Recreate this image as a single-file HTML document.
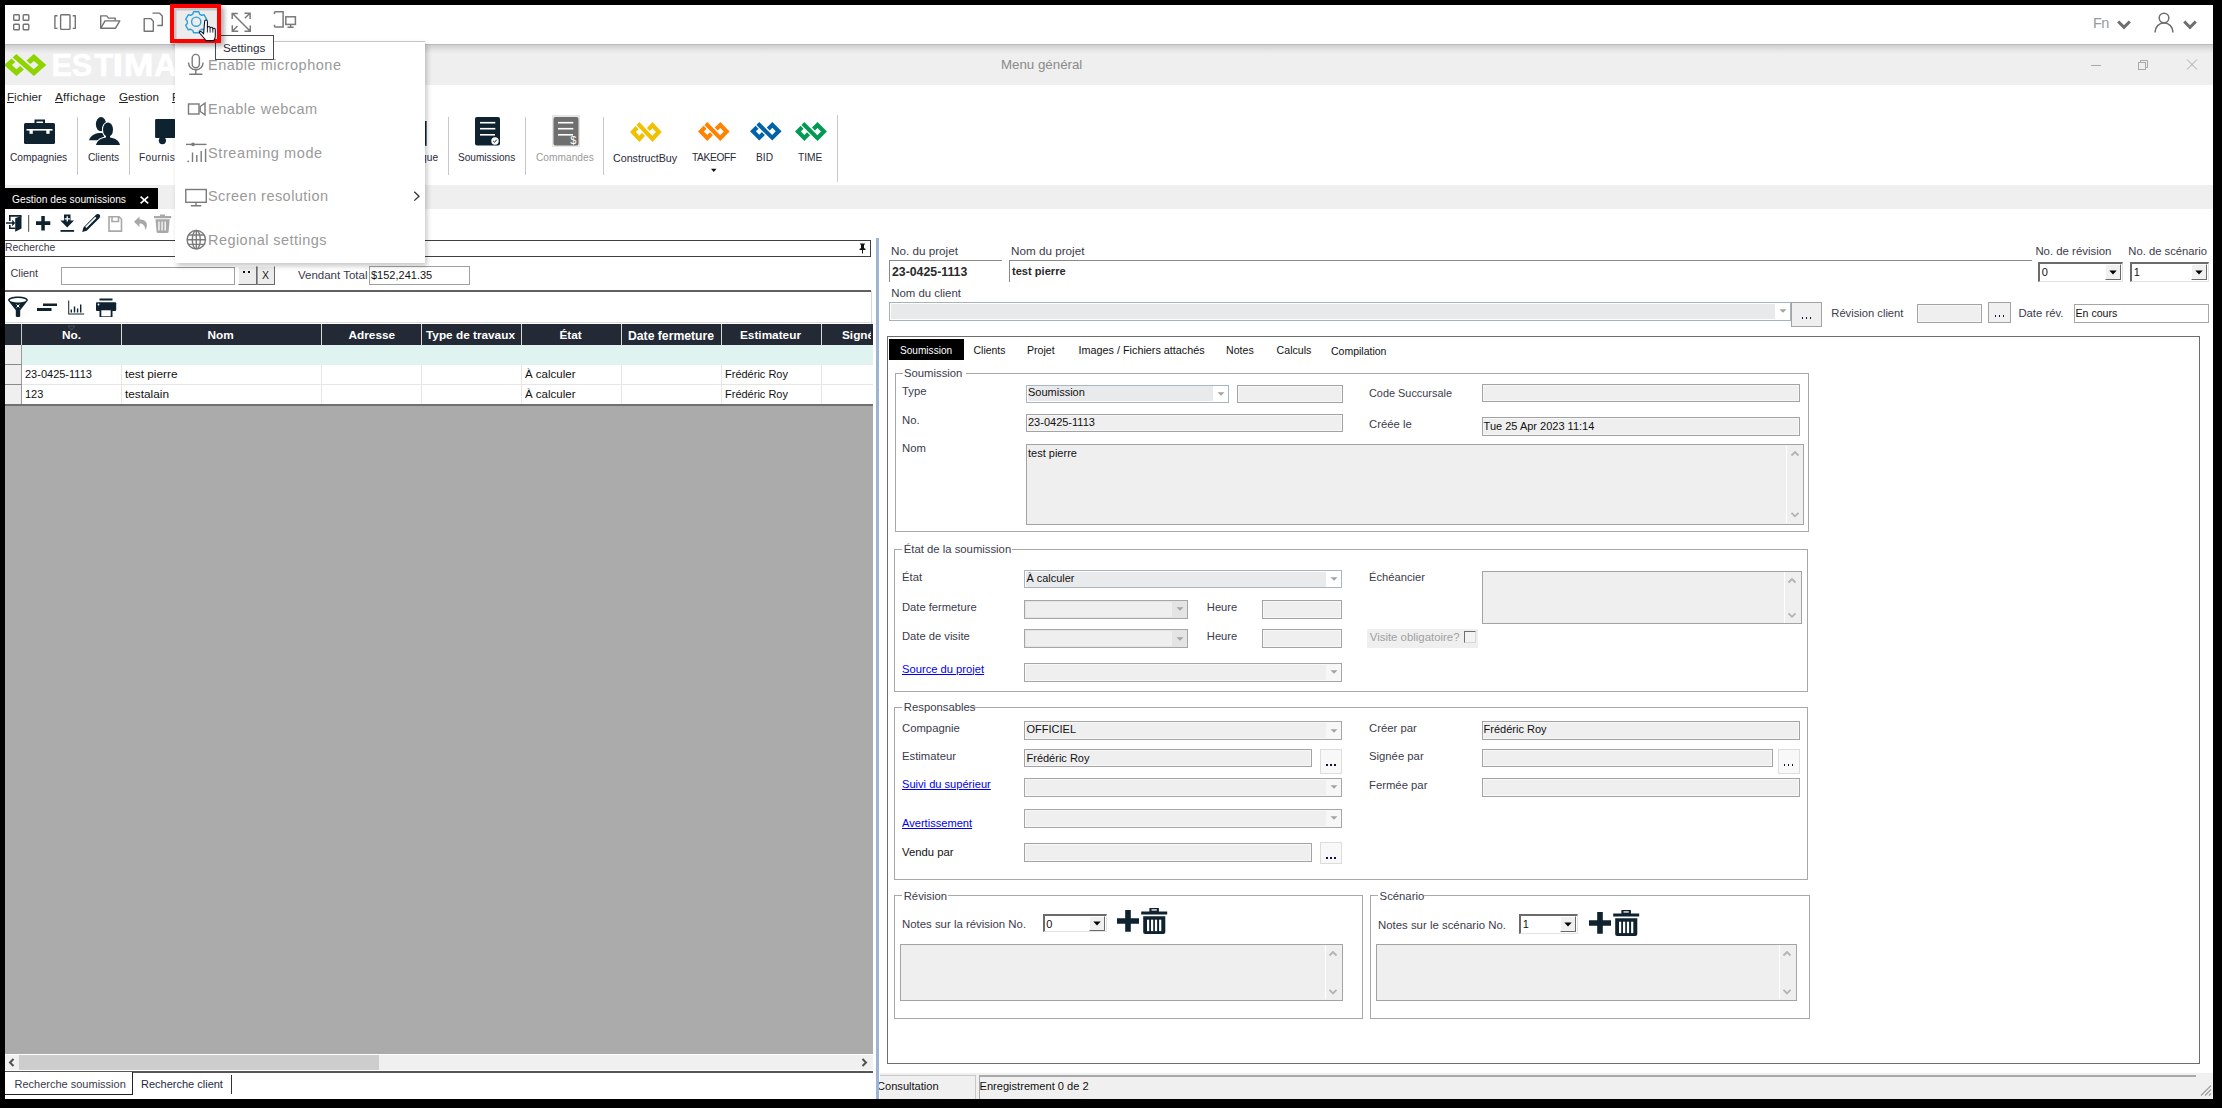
<!DOCTYPE html>
<html><head><meta charset="utf-8">
<style>
*{box-sizing:border-box}
html,body{margin:0;padding:0}
body{width:2222px;height:1108px;background:#000;position:relative;overflow:hidden;font-family:"Liberation Sans",sans-serif;color:#222}
.a{position:absolute}
.t{position:absolute;white-space:nowrap;line-height:1;font-family:"Liberation Sans",sans-serif}
svg{position:absolute;overflow:visible}
</style></head><body>
<!-- app white area -->
<div class="a" style="left:5px;top:5px;width:2208px;height:1094px;background:#fff"></div>

<!-- top toolbar bottom border -->
<div class="a" style="left:5px;top:44px;width:2208px;height:1.2px;background:#bbbbbb"></div>
<!-- title bar -->
<div class="a" style="left:5px;top:45px;width:2208px;height:40px;background:linear-gradient(#d0d0d0 0px,#d6d6d6 2px,#e4e4e4 5px,#efefef 8.5px,#efefef 100%)"></div>
<div class="t" style="left:1001px;top:58px;font-size:13.3px;color:#8a8a8a">Menu général</div>

<!-- gray band under ribbon -->
<div class="a" style="left:5px;top:185px;width:2208px;height:24px;background:#efefef"></div>
<div class="a" style="left:5px;top:188px;width:153px;height:21px;background:#000"></div>
<div class="t" style="left:11.5px;top:193.5px;font-size:11.4px;color:#fff;transform:scaleX(0.9);transform-origin:0 0">Gestion des soumissions</div>


<!-- ===== TOP TOOLBAR ===== -->
<svg style="left:0;top:0" width="320" height="45">
 <g fill="none" stroke="#737373" stroke-width="1.4" stroke-linejoin="round">
  <rect x="13.7" y="14.7" width="5.6" height="5.6" rx="0.8"/><rect x="23.2" y="14.7" width="5.6" height="5.6" rx="0.8"/>
  <rect x="13.7" y="24.2" width="5.6" height="5.6" rx="0.8"/><rect x="23.2" y="24.2" width="5.6" height="5.6" rx="0.8"/>
  <path d="M57.5 15.8h-2.6v12.6h2.6"/><rect x="60.6" y="14.7" width="9.4" height="14.7" rx="0.8"/><path d="M72.7 15.8h2.6v12.6h-2.6"/>
  <path d="M100.7 28.3V15.9h6l1.7 2.2h6.8v2.7"/><path d="M100.7 28.3l4.3-7.4h14.8l-4.4 7.4z"/>
  <path d="M144.2 31.2V18.6h6.5l2.6 2.6v10z"/><path d="M152.5 13.1h6.8l3 3v9.4h-5"/>
 </g>
 <g fill="none" stroke="#7a7a7a" stroke-width="1.5">
  <path d="M232.5 13.5l17.5 17.5M232.2 19v-5.6h5.6M250.3 25.5v5.8h-5.8M249.8 13.3l-5 5M232.5 31l5-5M244.5 13.3h5.6v5.6M232.3 25.3v5.9h5.9"/>
 </g>
 <g fill="none" stroke="#7a7a7a" stroke-width="1.5">
  <path d="M274.5 11.8h8.6v15.2h-8.6"/><path d="M274.5 11.8v2.2M274.5 24.8v2.2"/>
  <rect x="285.8" y="16.8" width="9.6" height="7.6"/><path d="M290.6 24.4v3M287.5 27.2h6.2"/>
 </g>
</svg>
<div class="t" style="left:2093px;top:16px;font-size:14.5px;color:#9a9a9a;letter-spacing:-0.5px">Fn</div>
<svg style="left:2080px;top:0" width="140" height="45">
 <g fill="none" stroke="#6e6e6e" stroke-width="3" stroke-linejoin="miter">
  <path d="M38.2 21.5l5.8 5.8 5.8-5.8"/><path d="M104.2 21.5l5.8 5.8 5.8-5.8"/>
 </g>
 <g fill="none" stroke="#6e6e6e" stroke-width="1.5">
  <circle cx="84" cy="18" r="4.8"/><path d="M75 32.6c0-5.8 4-9.6 9-9.6s9 3.8 9 9.6"/>
 </g>
</svg>
<!-- window controls -->
<svg style="left:2080px;top:50px" width="140" height="30">
 <g fill="none" stroke="#a8a8a8" stroke-width="1">
  <path d="M11 15.5h10"/>
  <rect x="58.5" y="12.5" width="7" height="7"/><path d="M60.5 12.5v-2h7v7h-2"/>
  <path d="M107 9.5l10 10M117 9.5l-10 10"/>
 </g>
</svg>


<!-- ===== TITLE BAR LOGO ===== -->
<svg style="left:1.95px;top:52.00px" width="46.3" height="26.1"><path d="M14.45 2.00 L31.69 17.30 L36.49 13.05 L31.88 8.96 L28.46 12.00 L24.53 8.52 L31.88 2.00 L44.33 13.05 L31.88 24.10 L10.59 5.43Z M9.47 6.42 L2.00 13.05 L14.45 24.10 L21.92 17.47 L18.00 13.99 L14.45 17.14 L9.84 13.05 L13.39 9.90Z" fill="#8fd400"/></svg>

<div class="t" style="left:51.5px;top:50.2px;font-size:30.6px;font-weight:700;color:#fff;-webkit-text-stroke:0.6px #fff;">E</div><div class="t" style="left:71.7px;top:50.2px;font-size:30.6px;font-weight:700;color:#fff;-webkit-text-stroke:0.6px #fff;">S</div><div class="t" style="left:94.2px;top:50.2px;font-size:30.6px;font-weight:700;color:#fff;-webkit-text-stroke:0.6px #fff;">T</div><div class="t" style="left:113.3px;top:50.2px;font-size:30.6px;font-weight:700;color:#fff;-webkit-text-stroke:0.6px #fff;transform:scaleX(1.25);transform-origin:2.2px 0;">I</div><div class="t" style="left:123.6px;top:50.2px;font-size:30.6px;font-weight:700;color:#fff;-webkit-text-stroke:0.6px #fff;transform:scaleX(1.17);transform-origin:2.2px 0;">M</div><div class="t" style="left:154.3px;top:50.2px;font-size:30.6px;font-weight:700;color:#fff;-webkit-text-stroke:0.6px #fff;transform:scaleX(1.05);transform-origin:0.1px 0;">A</div><div class="t" style="left:177.4px;top:50.2px;font-size:30.6px;font-weight:700;color:#fff;-webkit-text-stroke:0.6px #fff;">T</div>

<!-- ===== MENU BAR ===== -->
<div class="t" style="left:7px;top:90.8px;font-size:11.6px;color:#222"><u>F</u>ichier</div>
<div class="t" style="left:55px;top:90.8px;font-size:11.6px;letter-spacing:0.3px;color:#222"><u>A</u>ffichage</div>
<div class="t" style="left:119px;top:90.8px;font-size:11.6px;color:#222"><u>G</u>estion</div>
<div class="t" style="left:172px;top:90.8px;font-size:11.6px;color:#222"><u>F</u>ournisseurs</div>

<!-- ===== RIBBON ===== -->
<div class="a" style="left:77px;top:117px;width:1px;height:58px;background:#c8c8c8"></div>
<div class="a" style="left:129px;top:117px;width:1px;height:58px;background:#c8c8c8"></div>
<div class="a" style="left:448px;top:117px;width:1px;height:58px;background:#c8c8c8"></div>
<div class="a" style="left:525px;top:117px;width:1px;height:58px;background:#c8c8c8"></div>
<div class="a" style="left:603px;top:117px;width:1px;height:58px;background:#c8c8c8"></div>
<div class="a" style="left:837px;top:115px;width:1px;height:67px;background:#c8c8c8"></div>
<svg style="left:0;top:100px" width="860" height="80">
 <g fill="#0f2230">
  <!-- briefcase -->
  <path d="M34.5 19.5h10.5v4.5h-2v-2.5h-6.5v2.5h-2z"/>
  <rect x="24" y="23" width="31" height="21" rx="1.5"/>
 </g>
 <g fill="#fff"><rect x="26.5" y="29" width="26" height="1.6"/><rect x="29.5" y="30" width="3.3" height="3.8"/><rect x="46.3" y="30" width="3.3" height="3.8"/></g>
 <g fill="#0f2230">
  <!-- clients -->
  <ellipse cx="101" cy="24.2" rx="5.1" ry="7.1"/>
  <path d="M89 40.2C90.5 36 94 33.5 99 33h5v7.2z"/>
  <g stroke="#fff" stroke-width="2.2"><ellipse cx="108" cy="29.7" rx="5" ry="7.2"/><path d="M96 44.9C97.5 40 102 37.6 108 37.6S118.5 40 120 44.9z"/></g>
  <ellipse cx="108" cy="29.7" rx="5" ry="7.2"/><rect x="106" y="35" width="4" height="3.5"/><path d="M96 44.9C97.5 40 102 37.6 108 37.6S118.5 40 120 44.9z"/>
  <!-- fournisseurs truck (partial) -->
  <rect x="155.1" y="19" width="20" height="19" rx="1"/>
  <circle cx="162.4" cy="40.6" r="3.6"/>
  <!-- right bar of hidden icon -->
  <rect x="425" y="21" width="1.6" height="24.8"/>
  <!-- soumissions -->
  <rect x="475" y="17" width="25" height="28.5" rx="2"/>
 </g>
 <g fill="#fff">
  <rect x="480" y="21.9" width="15.3" height="1.6"/><rect x="480" y="27.9" width="15.3" height="1.6"/><rect x="480" y="34" width="15" height="1.6"/>
  <circle cx="495" cy="41" r="3.7"/>
 </g>
 <path d="M493.2 41l1.3 1.3 2.2-2.6" fill="none" stroke="#0f2230" stroke-width="1"/>
 <rect x="552" y="15" width="28" height="32" fill="#e6e6e6"/>
 <rect x="553.5" y="17" width="25" height="28.5" rx="2" fill="#6f6f6f"/>
 <g fill="#fff">
  <rect x="558" y="21.9" width="15.3" height="1.6"/><rect x="558" y="27.9" width="15.3" height="1.6"/><rect x="558" y="34" width="15" height="1.6"/>
 </g>
 <text x="570.3" y="44.3" font-family="Liberation Sans" font-size="11" fill="#fff">$</text>
 <path d="M711 68.8h5.5l-2.75 3.2z" fill="#111"/>
</svg>

<svg style="left:628.00px;top:119.90px" width="35.8" height="24.0"><path d="M11.35 2.00 L24.31 15.85 L27.91 12.00 L24.45 8.30 L21.88 11.05 L18.93 7.90 L24.45 2.00 L33.80 12.00 L24.45 22.00 L8.45 5.10Z M7.61 6.00 L2.00 12.00 L11.35 22.00 L16.96 16.00 L14.02 12.85 L11.35 15.70 L7.89 12.00 L10.56 9.15Z" fill="#efc100"/></svg>
<svg style="left:696.00px;top:119.50px" width="35.6" height="23.0"><path d="M11.29 2.00 L24.17 15.16 L27.74 11.50 L24.31 7.98 L21.75 10.60 L18.82 7.61 L24.31 2.00 L33.60 11.50 L24.31 21.00 L8.41 4.95Z M7.58 5.80 L2.00 11.50 L11.29 21.00 L16.87 15.30 L13.94 12.31 L11.29 15.02 L7.86 11.50 L10.50 8.79Z" fill="#ff8200"/></svg>
<svg style="left:748.20px;top:119.50px" width="35.6" height="22.6"><path d="M11.29 2.00 L24.17 14.88 L27.74 11.30 L24.31 7.86 L21.75 10.42 L18.82 7.49 L24.31 2.00 L33.60 11.30 L24.31 20.60 L8.41 4.88Z M7.58 5.72 L2.00 11.30 L11.29 20.60 L16.87 15.02 L13.94 12.09 L11.29 14.74 L7.86 11.30 L10.50 8.65Z" fill="#0062a8"/></svg>
<svg style="left:792.90px;top:119.50px" width="35.9" height="23.0"><path d="M11.38 2.00 L24.38 15.16 L27.99 11.50 L24.52 7.98 L21.94 10.60 L18.98 7.61 L24.52 2.00 L33.90 11.50 L24.52 21.00 L8.47 4.95Z M7.63 5.80 L2.00 11.50 L11.38 21.00 L17.01 15.30 L14.06 12.31 L11.38 15.02 L7.91 11.50 L10.58 8.79Z" fill="#009a52"/></svg>
<div class="t" style="left:10px;top:153px;font-size:10.2px;color:#2b2b3b">Compagnies</div>
<div class="t" style="left:88px;top:153px;font-size:10.2px;color:#2b2b3b">Clients</div>
<div class="t" style="left:139px;top:153px;font-size:10.2px;letter-spacing:0.3px;color:#2b2b3b">Fournisseurs</div>
<div class="t" style="left:382px;top:153px;font-size:10.2px;color:#2b2b3b">Bibliothèque</div>
<div class="t" style="left:458px;top:153px;font-size:10.1px;color:#2b2b3b">Soumissions</div>
<div class="t" style="left:536px;top:153px;font-size:10.2px;color:#9a9a9a">Commandes</div>
<div class="t" style="left:613px;top:153px;font-size:10.7px;color:#2b2b3b">ConstructBuy</div>
<div class="t" style="left:692px;top:153px;font-size:10.2px;letter-spacing:-0.35px;color:#2b2b3b">TAKEOFF</div>
<div class="t" style="left:756px;top:153px;font-size:10.2px;color:#2b2b3b">BID</div>
<div class="t" style="left:798px;top:153px;font-size:10.2px;color:#2b2b3b">TIME</div>


<!-- ===== LEFT PANEL ===== -->
<svg style="left:0;top:205px" width="180" height="120">
 <g fill="#0f2230">
  <!-- exit door -->
  <path d="M9 10.1h12.5v1.6H10.6v4.2H9z M9 20v4h6.2v-1.5h-4.6V20z"/>
  <path d="M15.2 13.2l6.3-2.4v12.6l-6.3 3.4z"/>
  <path d="M6 17.2h6.2v-2.5l3 3.3-3 3.3v-2.5H6z"/>
  <rect x="28" y="10" width="1.2" height="16.8" fill="#666"/>
  <!-- plus -->
  <path d="M41.3 11h3.5v5.3h5.5v3.6h-5.5v5.6h-3.5v-5.6H36v-3.6h5.3z"/>
  <!-- download -->
  <path d="M64 9.5h6.5v6h3.5l-6.8 7-6.8-7h3.6z"/>
  <rect x="60.5" y="25" width="13.6" height="1.8"/>
  <path d="M66.6 11.2h1.3v2h2v1.3h-2v2h-1.3v-2h-2v-1.3h2z" fill="#fff"/>
  <!-- pencil -->
  <path d="M96.2 9.6c0.9-0.9 2.4-0.9 3.3 0s0.9 2.4 0 3.3l-12.8 12.8-4.5 1.2 1.2-4.5z"/>
  <path d="M85.2 21.8l10-10 1.2 1.2-10 10z" fill="#fff"/>
 </g>
 <g fill="none" stroke="#a8a8a8" stroke-width="1.6">
  <path d="M109 11.8h10l2.5 2.5v11.8h-12.5z"/><path d="M112 12v4.5h6.5V12"/>
 </g>
 <path d="M139.5 11.5l-5.5 5.2 5.5 5.2v-3.3c3.2 0 5.5 1.5 5.8 6.5 1.5-2 1.8-4 1.5-6-0.6-3.5-3.4-4.7-7.3-4.7z" fill="#a8a8a8"/>
 <g fill="#a8a8a8">
  <path d="M160 9.5h5v1.6h6.2v2.2h-17.2v-2.2h6z"/>
  <path d="M155.5 14.3h14.2l-1.1 12.5c-0.1 0.7-0.6 1.1-1.2 1.1h-9.6c-0.6 0-1.1-0.4-1.2-1.1z"/>
 </g>
 <g fill="#fff"><rect x="158.3" y="16.5" width="1.3" height="9"/><rect x="161.4" y="16.5" width="1.3" height="9"/><rect x="164.5" y="16.5" width="1.3" height="9"/></g>
</svg>
<!-- Recherche header -->
<div class="a" style="left:5px;top:240px;width:866px;height:17px;border-top:1.5px solid #404040;border-bottom:1.5px solid #404040;border-right:1px solid #404040"></div>
<div class="t" style="left:5px;top:243px;font-size:10.4px;color:#3a3a4a">Recherche</div>
<svg style="left:857px;top:242px" width="12" height="12"><path d="M3 1.5h5v1h-1v3.5l1.5 1v1H6v3.5H5V8H2.5V7L4 6V2.5H3z" fill="#111"/></svg>
<!-- client row -->
<div class="t" style="left:10.5px;top:268px;font-size:10.8px;color:#3a3a4a">Client</div>
<div class="a" style="left:61px;top:266.5px;width:174px;height:18.5px;border:1px solid #a0a0a0;border-top-color:#9a9a9a;background:#fff"></div>
<div class="a" style="left:238px;top:266px;width:19px;height:19px;background:#ececec;border-right:1.5px solid #6a6a6a;border-bottom:1.5px solid #6a6a6a;border-left:1px solid #fff;border-top:1px solid #fff"></div>
<div class="a" style="left:257px;top:266px;width:18px;height:19px;background:#ececec;border-right:1.5px solid #6a6a6a;border-bottom:1.5px solid #6a6a6a;border-left:1px solid #9a9a9a;border-top:1px solid #fff"></div>
<div class="a" style="left:243.2px;top:271px;width:1.8px;height:2px;background:#111"></div>
<div class="a" style="left:248.2px;top:271px;width:1.8px;height:2px;background:#111"></div>
<div class="t" style="left:262px;top:270px;font-size:10.5px;color:#222">X</div>
<div class="t" style="left:298px;top:269.5px;font-size:11.5px;color:#3a3a4a">Vendant Total</div>
<div class="a" style="left:369px;top:266px;width:101px;height:19px;border:1px solid #a0a0a0;background:#fff"></div>
<div class="t" style="left:371px;top:269.5px;font-size:11px;color:#111">$152,241.35</div>
<div class="a" style="left:5px;top:290px;width:866px;height:2px;background:#606060"></div>
<!-- filter icons -->
<svg style="left:0;top:290px" width="130" height="30">
 <g fill="#0f2230">
  <path d="M8 10.2c0-2.3 4.5-3.7 10-3.7s10 1.4 10 3.7l-7.8 10v5.8c0 0.8-0.5 1-2.2 1s-2.2-0.2-2.2-1v-5.8z"/>
  <ellipse cx="18" cy="10.3" rx="8.4" ry="2.2" fill="#fff"/>
  <path d="M37 18h14.5v3H37zM43 13.5h14v2.6H43z"/>
  <path d="M68.2 10.5h1v13h15v1h-16z"/><rect x="70.6" y="19.5" width="1.4" height="3"/><rect x="73.8" y="16.5" width="1.4" height="6"/><rect x="76.9" y="18.5" width="1.4" height="4"/><rect x="80" y="14.5" width="1.4" height="8"/>
  <rect x="99.5" y="8.5" width="13" height="2"/>
  <rect x="96" y="12.2" width="20.2" height="8.8" rx="1"/>
  <rect x="99.5" y="18.5" width="13" height="8.5" fill="#0f2230"/>
  <rect x="101.3" y="20.3" width="9.4" height="6" fill="#fff"/>
  <circle cx="98.5" cy="14.5" r="0.9" fill="#fff"/>
 </g>
 <path d="M16.5 14.5l3 3M19.5 14.5l-3 3" stroke="#fff" stroke-width="1"/>
</svg>

<div class="a" style="left:871px;top:291px;width:1px;height:33px;background:#d8d8d8"></div>
<!-- grid -->
<div class="a" style="left:5px;top:322px;width:868px;height:1px;background:#dcdcdc"></div>
<div class="a" style="left:5px;top:324px;width:868px;height:21px;background:#232a35"></div>
<div class="a" style="left:21px;top:324px;width:1px;height:21px;background:#c8c8c8"></div>
<div class="a" style="left:121px;top:324px;width:1px;height:21px;background:#d8d8d8"></div>
<div class="a" style="left:321px;top:324px;width:1px;height:21px;background:#d8d8d8"></div>
<div class="a" style="left:421px;top:324px;width:1px;height:21px;background:#d8d8d8"></div>
<div class="a" style="left:521px;top:324px;width:1px;height:21px;background:#d8d8d8"></div>
<div class="a" style="left:621px;top:324px;width:1px;height:21px;background:#d8d8d8"></div>
<div class="a" style="left:721px;top:324px;width:1px;height:21px;background:#d8d8d8"></div>
<div class="a" style="left:821px;top:324px;width:1px;height:21px;background:#d8d8d8"></div>
<svg style="left:67px;top:325px" width="10" height="6"><path d="M1 1h7l-3.5 4z" fill="none" stroke="#4a5868" stroke-width="0.8"/></svg>
<div class="t" style="left:62px;top:329.5px;font-size:11.8px;font-weight:700;color:#fff">No.</div>
<div class="t" style="left:207.5px;top:329.5px;font-size:11.8px;font-weight:700;color:#fff">Nom</div>
<div class="t" style="left:348.5px;top:329.5px;font-size:11.8px;font-weight:700;color:#fff">Adresse</div>
<div class="t" style="left:426px;top:329.5px;font-size:11.8px;font-weight:700;color:#fff">Type de travaux</div>
<div class="t" style="left:559.5px;top:329.5px;font-size:11.8px;font-weight:700;color:#fff">État</div>
<div class="t" style="left:628px;top:329.5px;font-size:12.2px;font-weight:700;color:#fff">Date fermeture</div>
<div class="t" style="left:740px;top:329.5px;font-size:11.8px;font-weight:700;color:#fff">Estimateur</div>
<div class="t" style="left:842px;top:329.5px;font-size:11.8px;font-weight:700;color:#fff;width:29px;overflow:hidden">Signée</div>
<!-- filter row -->
<div class="a" style="left:22px;top:345px;width:851px;height:19.5px;background:#dff3f1"></div>
<div class="a" style="left:5px;top:345px;width:16.5px;height:60px;background:#efefef"></div>
<div class="a" style="left:21px;top:345px;width:1px;height:60px;background:#9a9a9a"></div>
<div class="a" style="left:5px;top:364px;width:16.5px;height:1px;background:#8a8a8a"></div>
<div class="a" style="left:5px;top:384px;width:16.5px;height:1px;background:#8a8a8a"></div>
<div class="a" style="left:22px;top:384px;width:851px;height:1px;background:#e6e6e6"></div>
<div class="a" style="left:121px;top:365px;width:1px;height:40px;background:#e6e6e6"></div>
<div class="a" style="left:321px;top:365px;width:1px;height:40px;background:#e6e6e6"></div>
<div class="a" style="left:421px;top:365px;width:1px;height:40px;background:#e6e6e6"></div>
<div class="a" style="left:521px;top:365px;width:1px;height:40px;background:#e6e6e6"></div>
<div class="a" style="left:621px;top:365px;width:1px;height:40px;background:#e6e6e6"></div>
<div class="a" style="left:721px;top:365px;width:1px;height:40px;background:#e6e6e6"></div>
<div class="a" style="left:821px;top:365px;width:1px;height:40px;background:#e6e6e6"></div>
<div class="t" style="left:25px;top:368.5px;font-size:11px;color:#111">23-0425-1113</div>
<div class="t" style="left:125px;top:368.5px;font-size:11.8px;color:#111">test pierre</div>
<div class="t" style="left:525px;top:368.5px;font-size:11.5px;color:#111">À calculer</div>
<div class="t" style="left:725px;top:368.5px;font-size:11px;color:#111">Frédéric Roy</div>
<div class="t" style="left:25px;top:388.5px;font-size:11px;color:#111">123</div>
<div class="t" style="left:125px;top:388.5px;font-size:11.8px;color:#111">testalain</div>
<div class="t" style="left:525px;top:388.5px;font-size:11.5px;color:#111">À calculer</div>
<div class="t" style="left:725px;top:388.5px;font-size:11px;color:#111">Frédéric Roy</div>
<!-- gray empty area -->
<div class="a" style="left:5px;top:404px;width:868px;height:1.5px;background:#707070"></div>
<div class="a" style="left:5px;top:405.5px;width:868px;height:648.5px;background:#ababab"></div>
<!-- hscroll -->
<div class="a" style="left:5px;top:1055px;width:868px;height:15px;background:#f0f0f0"></div>
<div class="a" style="left:19px;top:1055px;width:360px;height:15px;background:#cdcdcd"></div>
<svg style="left:5px;top:1055px" width="868" height="15"><g fill="none" stroke="#505050" stroke-width="2"><path d="M8.5 4l-3.5 3.5 3.5 3.5"/><path d="M857.5 4l3.5 3.5-3.5 3.5"/></g></svg>
<div class="a" style="left:5px;top:1071px;width:868px;height:2px;background:#555"></div>
<div class="a" style="left:873px;top:238px;width:1px;height:835px;background:#fff"></div>
<!-- bottom tabs -->
<div class="a" style="left:5px;top:1072px;width:128px;height:23px;border-right:1.5px solid #222;border-bottom:1.5px solid #222;background:#fff"></div>
<div class="t" style="left:14.5px;top:1078.5px;font-size:11px;color:#3a3a4a">Recherche soumission</div>
<div class="t" style="left:141px;top:1078.5px;font-size:11px;color:#222a44">Recherche client</div>
<div class="a" style="left:231px;top:1075px;width:1px;height:19px;background:#333"></div>

<!-- ===== RIGHT PANEL ===== -->
<div class="t" style="left:891px;top:244.6px;font-size:11.7px;color:#3b3b4b;">No. du projet</div>
<div class="t" style="left:1011px;top:244.6px;font-size:11.7px;color:#3b3b4b;">Nom du projet</div>
<div class="a" style="left:889px;top:259.5px;width:113.0px;height:1.3px;background:#8a8a8a"></div>
<div class="a" style="left:889px;top:259.5px;width:1.3px;height:22.5px;background:#8a8a8a"></div>
<div class="a" style="left:1009px;top:259.5px;width:1023.0px;height:1.3px;background:#8a8a8a"></div>
<div class="a" style="left:1009px;top:259.5px;width:1.3px;height:22.5px;background:#8a8a8a"></div>
<div class="t" style="left:892px;top:265.6px;font-size:12.3px;color:#2a2a2a;font-weight:700;">23-0425-1113</div>
<div class="t" style="left:1012px;top:265.7px;font-size:11.1px;color:#2a2a2a;font-weight:700;">test pierre</div>
<div class="t" style="left:2035.4px;top:245.7px;font-size:11.4px;color:#3b3b4b;">No. de révision</div>
<div class="t" style="left:2128.3px;top:245.7px;font-size:11.25px;color:#3b3b4b;">No. de scénario</div>
<div class="a" style="left:2038px;top:262px;width:85.0px;height:19.5px;background:#fff;border-top:2px solid #6b6b6b;border-left:2px solid #6b6b6b;border-right:1px solid #e3e3e3;border-bottom:1px solid #e3e3e3"></div>
<div class="a" style="left:2105px;top:264px;width:16.0px;height:16.0px;background:#f0f0f0;border-right:1.5px solid #6b6b6b;border-bottom:1.5px solid #6b6b6b;border-top:1px solid #fff;border-left:1px solid #fff"></div>
<svg style="left:2109px;top:269.75px" width="8" height="5"><path d="M0.3 0.5h7.4L4 4.5z" fill="#000"/></svg>
<div class="t" style="left:2041.7px;top:267.0px;font-size:11px;color:#111;">0</div>
<div class="a" style="left:2130px;top:262px;width:79.0px;height:19.5px;background:#fff;border-top:2px solid #6b6b6b;border-left:2px solid #6b6b6b;border-right:1px solid #e3e3e3;border-bottom:1px solid #e3e3e3"></div>
<div class="a" style="left:2191px;top:264px;width:16.0px;height:16.0px;background:#f0f0f0;border-right:1.5px solid #6b6b6b;border-bottom:1.5px solid #6b6b6b;border-top:1px solid #fff;border-left:1px solid #fff"></div>
<svg style="left:2195px;top:269.75px" width="8" height="5"><path d="M0.3 0.5h7.4L4 4.5z" fill="#000"/></svg>
<div class="t" style="left:2133.7px;top:267.0px;font-size:11px;color:#111;">1</div>
<div class="t" style="left:891.3px;top:287.7px;font-size:11.4px;color:#3b3b4b;">Nom du client</div>
<div class="a" style="left:889px;top:302px;width:902.0px;height:18.5px;background:#fff;border:1.5px solid #a9b1ba"></div>
<div class="a" style="left:890.5px;top:303.5px;width:884.5px;height:15.5px;background:#e8e9eb"></div>
<svg style="left:1779px;top:308.25px" width="8" height="6"><path d="M0.5 1.2h7L4 4.8z" fill="#a3a3a3"/></svg>
<div class="a" style="left:1791px;top:302px;width:31.0px;height:24.5px;background:#efefef;border:1.5px solid #a3a3a3"></div>
<div class="a" style="left:1801.9px;top:317.3px;width:1.2px;height:2.0px;background:#1a1040"></div>
<div class="a" style="left:1805.9px;top:317.3px;width:1.2px;height:2.0px;background:#1a1040"></div>
<div class="a" style="left:1809.9px;top:317.3px;width:1.2px;height:2.0px;background:#1a1040"></div>
<div class="t" style="left:1831.3px;top:307.7px;font-size:11.2px;color:#3b3b4b;">Révision client</div>
<div class="a" style="left:1917px;top:304px;width:65.0px;height:18.5px;background:#efefef;border:1.5px solid #a3a3a3;box-shadow:inset 0 0 0 1px #f7f7f7"></div>
<div class="a" style="left:1988.4px;top:302px;width:22.4px;height:20.6px;background:#f0f0f0;border:1.5px solid #a3a3a3"></div>
<div class="a" style="left:1995.0px;top:314.9px;width:1.2px;height:2.0px;background:#1a1040"></div>
<div class="a" style="left:1999.0px;top:314.9px;width:1.2px;height:2.0px;background:#1a1040"></div>
<div class="a" style="left:2003.0px;top:314.9px;width:1.2px;height:2.0px;background:#1a1040"></div>
<div class="t" style="left:2018.4px;top:307.7px;font-size:11.3px;color:#3b3b4b;">Date rév.</div>
<div class="a" style="left:2074px;top:304px;width:135.0px;height:18.5px;background:#fff;border:1px solid #a6a6a6"></div>
<div class="t" style="left:2075.5px;top:308.1px;font-size:10.6px;color:#111;">En cours</div>
<div class="a" style="left:887px;top:336px;width:1312.5px;height:728.0px;border:1.5px solid #6d6d6d"></div>
<div class="a" style="left:888.5px;top:339px;width:75.5px;height:21.0px;background:#000"></div>
<div class="t" style="left:900px;top:345.9px;font-size:10.1px;color:#fff;">Soumission</div>
<div class="t" style="left:973.6px;top:345.6px;font-size:10.4px;color:#111;">Clients</div>
<div class="t" style="left:1027px;top:345.4px;font-size:10.6px;color:#111;">Projet</div>
<div class="t" style="left:1078.6px;top:345.3px;font-size:10.8px;color:#111;">Images / Fichiers attachés</div>
<div class="t" style="left:1226px;top:345.4px;font-size:10.6px;color:#111;">Notes</div>
<div class="t" style="left:1276.6px;top:345.4px;font-size:10.6px;color:#111;">Calculs</div>
<div class="t" style="left:1331px;top:345.5px;font-size:10.5px;color:#111;">Compilation</div>
<div class="a" style="left:894.5px;top:372.8px;width:914.9px;height:159.4px;border:1px solid #a8a8a8"></div>
<div class="a" style="left:902.5px;top:366.8px;width:63.0px;height:12.0px;background:#fff"></div>
<div class="t" style="left:904.0px;top:368.0px;font-size:11.3px;color:#3b3b4b;">Soumission</div>
<div class="t" style="left:902px;top:386.1px;font-size:11.3px;color:#3b3b4b;">Type</div>
<div class="a" style="left:1026px;top:384.6px;width:203.0px;height:18.0px;background:#fff;border:1px solid #a9b5c1"></div>
<div class="a" style="left:1027.5px;top:386.1px;width:185.5px;height:15.0px;background:#e9eaec"></div>
<svg style="left:1217px;top:390.6px" width="8" height="6"><path d="M0.5 1.2h7L4 4.8z" fill="#a3a3a3"/></svg>
<div class="t" style="left:1028px;top:387.2px;font-size:11px;color:#111;">Soumission</div>
<div class="a" style="left:1236.5px;top:384.6px;width:106.5px;height:18.0px;background:#efefef;border:1.5px solid #a3a3a3;box-shadow:inset 0 0 0 1px #f7f7f7"></div>
<div class="t" style="left:902px;top:414.9px;font-size:11.3px;color:#3b3b4b;">No.</div>
<div class="a" style="left:1026px;top:414px;width:317.0px;height:18.3px;background:#efefef;border:1.5px solid #a3a3a3;box-shadow:inset 0 0 0 1px #f7f7f7"></div>
<div class="t" style="left:1028px;top:417.2px;font-size:11px;color:#111;">23-0425-1113</div>
<div class="t" style="left:902px;top:443.0px;font-size:11.3px;color:#3b3b4b;">Nom</div>
<div class="a" style="left:1026px;top:444.3px;width:778.0px;height:80.3px;background:#efefef;border:1.5px solid #a3a3a3"></div>
<div class="a" style="left:1786px;top:445.8px;width:1.0px;height:77.3px;background:#fff"></div>
<svg style="left:1789.5px;top:449.3px" width="10" height="70.30000000000001"><g fill="none" stroke="#b3b3b3" stroke-width="1.8"><path d="M1.5 6.5l3.5-3.5 3.5 3.5"/><path d="M1.5 63.80000000000001l3.5 3.5 3.5-3.5"/></g></svg>
<div class="t" style="left:1028px;top:447.7px;font-size:11px;color:#111;">test pierre</div>
<div class="t" style="left:1369px;top:388.3px;font-size:10.9px;color:#3b3b4b;">Code Succursale</div>
<div class="a" style="left:1482px;top:384.2px;width:318.0px;height:18.3px;background:#efefef;border:1.5px solid #a3a3a3;box-shadow:inset 0 0 0 1px #f7f7f7"></div>
<div class="t" style="left:1369px;top:418.5px;font-size:11.3px;color:#3b3b4b;">Créée le</div>
<div class="a" style="left:1482px;top:417.2px;width:318.0px;height:18.4px;background:#efefef;border:1.5px solid #a3a3a3;box-shadow:inset 0 0 0 1px #f7f7f7"></div>
<div class="t" style="left:1483.6px;top:420.7px;font-size:11px;color:#111;">Tue 25 Apr 2023 11:14</div>
<div class="a" style="left:894.3px;top:548.5px;width:913.7px;height:143.8px;border:1px solid #a8a8a8"></div>
<div class="a" style="left:902.3px;top:542.5px;width:110.0px;height:12.0px;background:#fff"></div>
<div class="t" style="left:903.8px;top:543.7px;font-size:11.3px;color:#3b3b4b;">État de la soumission</div>
<div class="t" style="left:902px;top:571.9px;font-size:11.3px;color:#3b3b4b;">État</div>
<div class="a" style="left:1024.3px;top:570.4px;width:317.3px;height:17.9px;background:#fff;border:1px solid #a9b5c1"></div>
<div class="a" style="left:1025.8px;top:571.9px;width:299.8px;height:14.9px;background:#e9eaec"></div>
<svg style="left:1329.6px;top:576.3499999999999px" width="8" height="6"><path d="M0.5 1.2h7L4 4.8z" fill="#a3a3a3"/></svg>
<div class="t" style="left:1026.5px;top:573.4px;font-size:10.9px;color:#111;">À calculer</div>
<div class="t" style="left:902px;top:601.7px;font-size:11.2px;color:#3b3b4b;">Date fermeture</div>
<div class="a" style="left:1024.3px;top:600.2px;width:163.5px;height:18.4px;background:#e4e4e4;border:1.5px solid #a6a6a6"></div>
<div class="a" style="left:1025.8px;top:601.7px;width:146.0px;height:15.4px;background:#efefef"></div>
<svg style="left:1175.8px;top:606.4000000000001px" width="8" height="6"><path d="M0.5 1.2h7L4 4.8z" fill="#a3a3a3"/></svg>
<div class="t" style="left:1206.8px;top:601.7px;font-size:11.2px;color:#3b3b4b;">Heure</div>
<div class="a" style="left:1262px;top:600.2px;width:79.6px;height:18.4px;background:#efefef;border:1.5px solid #a3a3a3;box-shadow:inset 0 0 0 1px #f7f7f7"></div>
<div class="t" style="left:902px;top:630.7px;font-size:11.2px;color:#3b3b4b;">Date de visite</div>
<div class="a" style="left:1024.3px;top:629.4px;width:163.5px;height:18.3px;background:#e4e4e4;border:1.5px solid #a6a6a6"></div>
<div class="a" style="left:1025.8px;top:630.9px;width:146.0px;height:15.3px;background:#efefef"></div>
<svg style="left:1175.8px;top:635.55px" width="8" height="6"><path d="M0.5 1.2h7L4 4.8z" fill="#a3a3a3"/></svg>
<div class="t" style="left:1206.8px;top:630.7px;font-size:11.2px;color:#3b3b4b;">Heure</div>
<div class="a" style="left:1262px;top:629.4px;width:79.6px;height:18.3px;background:#efefef;border:1.5px solid #a3a3a3;box-shadow:inset 0 0 0 1px #f7f7f7"></div>
<div class="t" style="left:902px;top:663.7px;font-size:11.2px;color:#0000ee;text-decoration:underline">Source du projet</div>
<div class="a" style="left:1024.3px;top:663.3px;width:317.3px;height:18.3px;background:#f7f7f7;border:1.5px solid #a6a6a6"></div>
<div class="a" style="left:1025.8px;top:664.8px;width:299.8px;height:15.3px;background:#efefef"></div>
<svg style="left:1329.6px;top:669.45px" width="8" height="6"><path d="M0.5 1.2h7L4 4.8z" fill="#a3a3a3"/></svg>
<div class="t" style="left:1369px;top:571.5px;font-size:11.2px;color:#3b3b4b;">Échéancier</div>
<div class="a" style="left:1482px;top:570.7px;width:319.6px;height:53.8px;background:#efefef;border:1.5px solid #a3a3a3"></div>
<div class="a" style="left:1783.6px;top:572.2px;width:1.0px;height:50.8px;background:#fff"></div>
<svg style="left:1787.1px;top:575.7px" width="10" height="43.799999999999955"><g fill="none" stroke="#b3b3b3" stroke-width="1.8"><path d="M1.5 6.5l3.5-3.5 3.5 3.5"/><path d="M1.5 37.299999999999955l3.5 3.5 3.5-3.5"/></g></svg>
<div class="a" style="left:1367px;top:629px;width:110.8px;height:18.6px;background:#efefef"></div>
<div class="t" style="left:1369.8px;top:632.0px;font-size:11.4px;color:#a0a0a0;">Visite obligatoire?</div>
<div class="a" style="left:1464px;top:630.8px;width:12.0px;height:12.0px;border-top:1.5px solid #6e6e6e;border-left:1.5px solid #6e6e6e;border-right:1px solid #d8d8d8;border-bottom:1px solid #d8d8d8;background:#f3f3f3"></div>
<div class="a" style="left:894.3px;top:706.6px;width:914.0px;height:173.9px;border:1px solid #a8a8a8"></div>
<div class="a" style="left:902.3px;top:700.6px;width:68.0px;height:12.0px;background:#fff"></div>
<div class="t" style="left:903.8px;top:701.8px;font-size:11.3px;color:#3b3b4b;">Responsables</div>
<div class="t" style="left:902px;top:722.8px;font-size:11.3px;color:#3b3b4b;">Compagnie</div>
<div class="a" style="left:1024.3px;top:721.3px;width:317.3px;height:18.4px;background:#f7f7f7;border:1.5px solid #a6a6a6"></div>
<div class="a" style="left:1025.8px;top:722.8px;width:299.8px;height:15.4px;background:#efefef"></div>
<svg style="left:1329.6px;top:727.5px" width="8" height="6"><path d="M0.5 1.2h7L4 4.8z" fill="#a3a3a3"/></svg>
<div class="t" style="left:1026.5px;top:724.3px;font-size:11px;color:#111;">OFFICIEL</div>
<div class="t" style="left:902px;top:750.9px;font-size:11.3px;color:#3b3b4b;">Estimateur</div>
<div class="a" style="left:1024.3px;top:749.4px;width:287.3px;height:17.9px;background:#efefef;border:1.5px solid #a3a3a3;box-shadow:inset 0 0 0 1px #f7f7f7"></div>
<div class="t" style="left:1026.5px;top:752.8px;font-size:11px;color:#111;">Frédéric Roy</div>
<div class="a" style="left:1320.3px;top:749.4px;width:21.3px;height:24.2px;background:#f8f8f8;border:1px solid #dcdcdc"></div>
<div class="a" style="left:1326.35px;top:764.1999999999999px;width:1.2px;height:2.0px;background:#1a1040"></div>
<div class="a" style="left:1330.35px;top:764.1999999999999px;width:1.2px;height:2.0px;background:#1a1040"></div>
<div class="a" style="left:1334.35px;top:764.1999999999999px;width:1.2px;height:2.0px;background:#1a1040"></div>
<div class="t" style="left:902px;top:779.4px;font-size:11.1px;color:#0000ee;text-decoration:underline">Suivi du supérieur</div>
<div class="a" style="left:1024.3px;top:778px;width:317.3px;height:18.5px;background:#f7f7f7;border:1.5px solid #a6a6a6"></div>
<div class="a" style="left:1025.8px;top:779.5px;width:299.8px;height:15.5px;background:#efefef"></div>
<svg style="left:1329.6px;top:784.25px" width="8" height="6"><path d="M0.5 1.2h7L4 4.8z" fill="#a3a3a3"/></svg>
<div class="t" style="left:902px;top:817.9px;font-size:11.1px;color:#0000ee;text-decoration:underline">Avertissement</div>
<div class="a" style="left:1024.3px;top:809.2px;width:317.3px;height:18.4px;background:#f7f7f7;border:1.5px solid #a6a6a6"></div>
<div class="a" style="left:1025.8px;top:810.7px;width:299.8px;height:15.4px;background:#efefef"></div>
<svg style="left:1329.6px;top:815.4000000000001px" width="8" height="6"><path d="M0.5 1.2h7L4 4.8z" fill="#a3a3a3"/></svg>
<div class="t" style="left:902px;top:846.8px;font-size:11.3px;color:#111;">Vendu par</div>
<div class="a" style="left:1024.3px;top:843.4px;width:287.3px;height:18.3px;background:#efefef;border:1.5px solid #a3a3a3;box-shadow:inset 0 0 0 1px #f7f7f7"></div>
<div class="a" style="left:1320.3px;top:842.3px;width:21.3px;height:22.2px;background:#f8f8f8;border:1px solid #dcdcdc"></div>
<div class="a" style="left:1326.35px;top:857.0999999999999px;width:1.2px;height:2.0px;background:#1a1040"></div>
<div class="a" style="left:1330.35px;top:857.0999999999999px;width:1.2px;height:2.0px;background:#1a1040"></div>
<div class="a" style="left:1334.35px;top:857.0999999999999px;width:1.2px;height:2.0px;background:#1a1040"></div>
<div class="t" style="left:1369px;top:722.8px;font-size:11.3px;color:#3b3b4b;">Créer par</div>
<div class="a" style="left:1482px;top:721.3px;width:317.7px;height:18.4px;background:#efefef;border:1.5px solid #a3a3a3;box-shadow:inset 0 0 0 1px #f7f7f7"></div>
<div class="t" style="left:1483.6px;top:724.3px;font-size:11px;color:#111;">Frédéric Roy</div>
<div class="t" style="left:1369px;top:750.9px;font-size:11.3px;color:#3b3b4b;">Signée par</div>
<div class="a" style="left:1482px;top:749.4px;width:291.3px;height:17.9px;background:#efefef;border:1.5px solid #a3a3a3;box-shadow:inset 0 0 0 1px #f7f7f7"></div>
<div class="a" style="left:1778px;top:749.4px;width:21.7px;height:24.2px;background:#f8f8f8;border:1px solid #dcdcdc"></div>
<div class="a" style="left:1784.25px;top:764.1999999999999px;width:1.2px;height:2.0px;background:#1a1040"></div>
<div class="a" style="left:1788.25px;top:764.1999999999999px;width:1.2px;height:2.0px;background:#1a1040"></div>
<div class="a" style="left:1792.25px;top:764.1999999999999px;width:1.2px;height:2.0px;background:#1a1040"></div>
<div class="t" style="left:1369px;top:779.8px;font-size:11.3px;color:#3b3b4b;">Fermée par</div>
<div class="a" style="left:1482px;top:778px;width:317.7px;height:18.5px;background:#efefef;border:1.5px solid #a3a3a3;box-shadow:inset 0 0 0 1px #f7f7f7"></div>
<div class="a" style="left:894.2px;top:895.3px;width:469.2px;height:124.2px;border:1px solid #a8a8a8"></div>
<div class="a" style="left:902.2px;top:889.3px;width:46.0px;height:12.0px;background:#fff"></div>
<div class="t" style="left:903.7px;top:890.5px;font-size:11.3px;color:#3b3b4b;">Révision</div>
<div class="t" style="left:902px;top:919.2px;font-size:11.4px;color:#3b3b4b;">Notes sur la révision No.</div>
<div class="a" style="left:1042.5px;top:913.8px;width:64.8px;height:18.6px;background:#fff;border-top:2px solid #6b6b6b;border-left:2px solid #6b6b6b;border-right:1px solid #e3e3e3;border-bottom:1px solid #e3e3e3"></div>
<div class="a" style="left:1089.3px;top:915.8px;width:16.0px;height:15.1px;background:#f0f0f0;border-right:1.5px solid #6b6b6b;border-bottom:1.5px solid #6b6b6b;border-top:1px solid #fff;border-left:1px solid #fff"></div>
<svg style="left:1093.3px;top:921.0999999999999px" width="8" height="5"><path d="M0.3 0.5h7.4L4 4.5z" fill="#000"/></svg>
<div class="t" style="left:1046.2px;top:918.8px;font-size:11px;color:#111;">0</div>
<div class="a" style="left:900.3px;top:943.5px;width:442.5px;height:57.4px;background:#efefef;border:1.5px solid #a3a3a3"></div>
<div class="a" style="left:1324.8px;top:945.0px;width:1.0px;height:54.4px;background:#fff"></div>
<svg style="left:1328.3px;top:948.5px" width="10" height="47.39999999999998"><g fill="none" stroke="#b3b3b3" stroke-width="1.8"><path d="M1.5 6.5l3.5-3.5 3.5 3.5"/><path d="M1.5 40.89999999999998l3.5 3.5 3.5-3.5"/></g></svg>
<div class="a" style="left:1370.1px;top:895.3px;width:439.5px;height:124.2px;border:1px solid #a8a8a8"></div>
<div class="a" style="left:1378.1px;top:889.3px;width:46.0px;height:12.0px;background:#fff"></div>
<div class="t" style="left:1379.6px;top:890.5px;font-size:11.3px;color:#3b3b4b;">Scénario</div>
<div class="t" style="left:1378px;top:920.2px;font-size:11.4px;color:#3b3b4b;">Notes sur le scénario No.</div>
<div class="a" style="left:1519px;top:914.4px;width:59.3px;height:19.2px;background:#fff;border-top:2px solid #6b6b6b;border-left:2px solid #6b6b6b;border-right:1px solid #e3e3e3;border-bottom:1px solid #e3e3e3"></div>
<div class="a" style="left:1560.3px;top:916.4px;width:16.0px;height:15.7px;background:#f0f0f0;border-right:1.5px solid #6b6b6b;border-bottom:1.5px solid #6b6b6b;border-top:1px solid #fff;border-left:1px solid #fff"></div>
<svg style="left:1564.3px;top:922.0px" width="8" height="5"><path d="M0.3 0.5h7.4L4 4.5z" fill="#000"/></svg>
<div class="t" style="left:1522.7px;top:919.4px;font-size:11px;color:#111;">1</div>
<div class="a" style="left:1376.2px;top:943.5px;width:420.5px;height:57.4px;background:#efefef;border:1.5px solid #a3a3a3"></div>
<div class="a" style="left:1778.7px;top:945.0px;width:1.0px;height:54.4px;background:#fff"></div>
<svg style="left:1782.2px;top:948.5px" width="10" height="47.39999999999998"><g fill="none" stroke="#b3b3b3" stroke-width="1.8"><path d="M1.5 6.5l3.5-3.5 3.5 3.5"/><path d="M1.5 40.89999999999998l3.5 3.5 3.5-3.5"/></g></svg>
<svg style="left:1117px;top:908px" width="60" height="30"><g fill="#0f2230">
<path d="M8.2 2h5.6v8.2h8.2v5.5h-8.2v8.1H8.2v-8.1H0v-5.5h8.2z"/>
<path d="M32.4 0.1h9.5v3.5h8.3v3H24.2v-3h8.2z"/>
<path d="M26.2 8.3h22.1v15.8c0 1.2-0.8 2-2 2H28.2c-1.2 0-2-0.8-2-2z"/>
</g><g fill="#fff"><rect x="34.5" y="1.3" width="5.3" height="1.3"/><rect x="30" y="11.7" width="2.2" height="11.4"/><rect x="34" y="11.7" width="2.2" height="11.4"/><rect x="37.9" y="11.7" width="2.2" height="11.4"/><rect x="42.1" y="11.7" width="2.2" height="11.4"/></g></svg>
<svg style="left:1589px;top:910px" width="60" height="30"><g fill="#0f2230">
<path d="M8.2 2h5.6v8.2h8.2v5.5h-8.2v8.1H8.2v-8.1H0v-5.5h8.2z"/>
<path d="M32.4 0.1h9.5v3.5h8.3v3H24.2v-3h8.2z"/>
<path d="M26.2 8.3h22.1v15.8c0 1.2-0.8 2-2 2H28.2c-1.2 0-2-0.8-2-2z"/>
</g><g fill="#fff"><rect x="34.5" y="1.3" width="5.3" height="1.3"/><rect x="30" y="11.7" width="2.2" height="11.4"/><rect x="34" y="11.7" width="2.2" height="11.4"/><rect x="37.9" y="11.7" width="2.2" height="11.4"/><rect x="42.1" y="11.7" width="2.2" height="11.4"/></g></svg>
<div class="a" style="left:880px;top:1073px;width:1333.0px;height:26.0px;background:#f0f0f0"></div>
<div class="a" style="left:880px;top:1075px;width:95.5px;height:24.0px;border-top:1px solid #c8c8c8;border-right:1px solid #c8c8c8"></div>
<div class="a" style="left:979px;top:1075px;width:1217.0px;height:24.0px;border-top:2px solid #a8a8a8;border-left:1px solid #a8a8a8"></div>
<div class="t" style="left:877px;top:1080.9px;font-size:11.1px;color:#111;">Consultation</div>
<div class="t" style="left:979.5px;top:1080.9px;font-size:11.1px;color:#111;">Enregistrement 0 de 2</div>
<svg style="left:2198px;top:1083px" width="15" height="15"><g stroke="#a0a0a0" stroke-width="1.2"><path d="M3 12.5l10-10M7 12.5l6-6M11 12.5l2-2"/></g></svg>
<!-- ===== END RIGHT ===== -->
<!-- splitter -->
<div class="a" style="left:876px;top:238px;width:3px;height:861px;background:#9db4d2"></div>


<!-- ===== TAB CLOSE ===== -->
<svg style="left:139px;top:195px" width="12" height="11"><path d="M1.6 1.6l7.6 6.8M9.2 1.6l-7.6 6.8" stroke="#fff" stroke-width="1.6"/></svg>

<!-- black frame -->
<div class="a" style="left:0;top:0;width:5px;height:1108px;background:#000"></div>
<div class="a" style="left:2213px;top:0;width:9px;height:1108px;background:#000"></div>
<div class="a" style="left:0;top:1099px;width:2222px;height:9px;background:#000"></div>
<div class="a" style="left:0;top:0;width:2222px;height:5px;background:#000"></div>
<!-- ===== SETTINGS DROPDOWN ===== -->
<div class="a" style="left:175px;top:41px;width:250px;height:222px;background:#fff;border-top:1px solid #c6c6c6;box-shadow:2px 3px 5px rgba(0,0,0,0.22)"></div>
<svg style="left:175px;top:41px" width="250" height="222">
 <g fill="none" stroke="#7a7a7a" stroke-width="1.4">
  <!-- mic -->
  <rect x="17.2" y="13.4" width="7.2" height="13.3" rx="3.6"/>
  <path d="M13.5 21.5c0 4.2 3.3 7.3 7.3 7.3s7.3-3.1 7.3-7.3"/><path d="M20.8 28.8v4.5M14.2 33.3h13.2"/>
  <!-- webcam -->
  <rect x="13.5" y="63" width="10.5" height="10"/><path d="M30 62.2v11.6l-4.8-3.3v-5z"/>
  <!-- streaming -->
  <path d="M11 103.4h20.5"/>
  <path d="M17.5 111.5v9.5M21.8 114v7M26.2 110v11M30.6 107.8v13.2"/>
  <!-- screen -->
  <rect x="10.8" y="148.5" width="20.5" height="12.8"/><path d="M21 161.3v3.5M15.8 164.8h10.5"/>
  <!-- globe -->
  <circle cx="21.3" cy="198.7" r="9.2"/><ellipse cx="21.3" cy="198.7" rx="4" ry="9.2"/><path d="M21.3 189.5v18.4M12.1 198.7h18.4M13.2 194h16.2M13.2 203.4h16.2"/>
  <!-- submenu arrow -->
  <path d="M239.3 150.8L244 155.2L239.3 159.6" stroke="#333" stroke-width="1.3"/>
 </g>
 <circle cx="18" cy="103.4" r="1.8" fill="#7a7a7a"/>
 <rect x="12.5" y="119.6" width="1.6" height="1.6" fill="#7a7a7a"/>
</svg>
<div class="t" style="left:208px;top:57.9px;font-size:14.5px;letter-spacing:0.5px;color:#9a9a9a">Enable microphone</div>
<div class="t" style="left:208px;top:101.8px;font-size:14.5px;letter-spacing:0.5px;color:#9a9a9a">Enable webcam</div>
<div class="t" style="left:208px;top:145.6px;font-size:14.5px;letter-spacing:0.6px;color:#9a9a9a">Streaming mode</div>
<div class="t" style="left:208px;top:189.4px;font-size:14.5px;letter-spacing:0.45px;color:#9a9a9a">Screen resolution</div>
<div class="t" style="left:208px;top:233.3px;font-size:14.5px;letter-spacing:0.45px;color:#9a9a9a">Regional settings</div>
<!-- tooltip -->
<div class="a" style="left:215px;top:34.8px;width:59px;height:25px;background:#fff;border:1px solid #4a4a4a"></div>
<div class="t" style="left:223px;top:42.1px;font-size:11.7px;color:#2b2b3b">Settings</div>

<!-- red settings button -->
<div class="a" style="left:170px;top:4px;width:51px;height:39px;box-shadow:3px 3px 5px rgba(0,0,0,0.35)"></div>
<svg style="left:0;top:0" width="320" height="50">
 <rect x="170" y="4" width="51" height="39" fill="#ff0000"/>
 <rect x="174" y="8" width="43" height="31" fill="#ececec"/>
 <path d="M174 8h43v2.5h-40.5v28.5h-2.5z" fill="#bdbdbd" opacity="0.8"/>
 <g fill="none" stroke="#2c9fdc" stroke-width="1.4">
  <circle cx="196.2" cy="21.7" r="4.6"/>
  <path d="M193.6 11.8h5.2l0.8 2.3 2.1 1.2 2.4-0.5 2.6 4.5-1.6 1.8v2.4l1.6 1.8-2.6 4.5-2.4-0.5-2.1 1.2-0.8 2.3h-5.2l-0.8-2.3-2.1-1.2-2.4 0.5-2.6-4.5 1.6-1.8v-2.4l-1.6-1.8 2.6-4.5 2.4 0.5 2.1-1.2z" stroke-linejoin="round"/>
 </g>
 <path d="M204.6 21.6c0-1 0.6-1.6 1.4-1.6s1.4 0.6 1.4 1.6v6.2c0.2-0.9 0.7-1.4 1.4-1.4s1.3 0.6 1.3 1.4v0.6c0.2-0.8 0.7-1.2 1.4-1.2s1.3 0.6 1.3 1.4v0.8c0.2-0.7 0.7-1.1 1.3-1.1 0.7 0 1.2 0.6 1.2 1.4v6.4c0 1.8-0.6 3.3-1.5 4.5h-7.8l-3.8-4.6c-0.6-0.8-1.8-2-2.4-2.8-0.5-0.7-0.3-1.6 0.5-1.7 0.7-0.1 1.3 0.3 1.9 0.9l1.4 1.5z" fill="#fff" stroke="#0a0f25" stroke-width="1.05" stroke-linejoin="round"/>
 <path d="M207.4 28v4.6M210.1 28.6v4M212.8 29.6v3" stroke="#0a0f25" stroke-width="0.9"/>
</svg>
</body></html>
